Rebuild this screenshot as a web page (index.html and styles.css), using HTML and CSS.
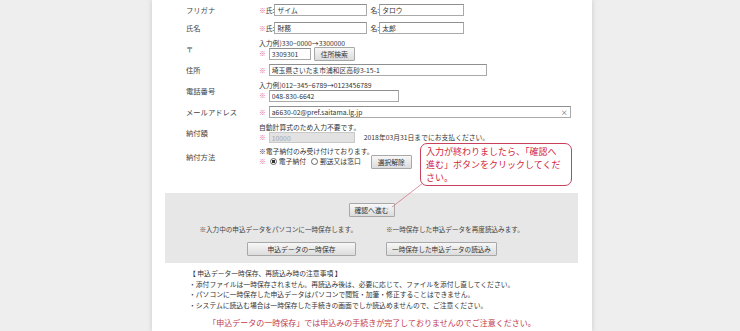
FILE: index.html
```html
<!DOCTYPE html>
<html lang="ja">
<head>
<meta charset="utf-8">
<title>申込フォーム</title>
<link rel="stylesheet" href="styles.css">
</head>
<body>
<div class="page">
  <div class="form">
    <div class="row">
      <div class="label">フリガナ</div>
      <div class="val">
        <div class="line"><span class="req tight">※</span><span class="pre">氏:</span><input class="txt w-sei" value="ザイム"><span class="pre mei">名:</span><input class="txt w-mei" value="タロウ"></div>
      </div>
    </div>
    <div class="row">
      <div class="label">氏名</div>
      <div class="val">
        <div class="line"><span class="req tight">※</span><span class="pre">氏:</span><input class="txt w-sei" value="財務"><span class="pre mei">名:</span><input class="txt w-mei" value="太郎"></div>
      </div>
    </div>
    <div class="row tall">
      <div class="label">〒</div>
      <div class="val">
        <div class="ex">入力例)330−0000→3300000</div>
        <div class="line"><span class="req">※</span><input class="txt w-zip" value="3309301"><button class="btn b-zip">住所検索</button></div>
      </div>
    </div>
    <div class="row">
      <div class="label">住所</div>
      <div class="val">
        <div class="line"><span class="req">※</span><input class="txt w-addr" value="埼玉県さいたま市浦和区高砂3-15-1"></div>
      </div>
    </div>
    <div class="row tall">
      <div class="label">電話番号</div>
      <div class="val">
        <div class="ex">入力例)012−345−6789→0123456789</div>
        <div class="line"><span class="req">※</span><input class="txt w-tel" value="048-830-6642"></div>
      </div>
    </div>
    <div class="row">
      <div class="label">メールアドレス</div>
      <div class="val">
        <div class="line"><span class="req">※</span><span class="clearwrap"><input class="txt w-mail" value="a6630-02@pref.saitama.lg.jp"><span class="clear">×</span></span></div>
      </div>
    </div>
    <div class="row tall">
      <div class="label">納付額</div>
      <div class="val">
        <div class="ex">自動計算式のため入力不要です。</div>
        <div class="line"><span class="req">※</span><input class="txt w-amt" value="10000" disabled><span class="due">2018年03月31日までにお支払ください。</span></div>
      </div>
    </div>
    <div class="row tall">
      <div class="label">納付方法</div>
      <div class="val">
        <div class="ex">※電子納付のみ受け付けております。</div>
        <div class="line"><span class="req">※</span><span class="radio on"></span><span class="opt">電子納付</span><span class="radio"></span><span class="opt">郵送又は窓口</span><button class="btn b-clr">選択解除</button></div>
      </div>
    </div>
  </div>

  <div class="actions">
    <div class="confirm"><button class="btn b-confirm">確認へ進む</button></div>
    <div class="cols">
      <div class="col left">
        <div class="note">※入力中の申込データをパソコンに一時保存します。</div>
        <button class="btn b-save">申込データの一時保存</button>
      </div>
      <div class="col right">
        <div class="note">※一時保存した申込データを再度読込みます。</div>
        <button class="btn b-load">一時保存した申込データの読込み</button>
      </div>
    </div>
  </div>

  <div class="notes">
    <div>【 申込データ一時保存、再読込み時の注意事項 】</div>
    <div>・添付ファイルは一時保存されません。再読込み後は、必要に応じて、ファイルを添付し直してください。</div>
    <div>・パソコンに一時保存した申込データはパソコンで閲覧・加筆・修正することはできません。</div>
    <div>・システムに読込む場合は一時保存した手続きの画面でしか読込めませんので、ご注意ください。</div>
  </div>
  <div class="warn">「申込データの一時保存」では申込みの手続きが完了しておりませんのでご注意ください。</div>

  <svg class="pointer" width="36" height="28" viewBox="0 0 36 28"><line x1="2" y1="26" x2="33" y2="2" stroke="#d4788c" stroke-width="0.8"/></svg>
  <div class="callout"><div class="cl">入力が終わりましたら、「確認へ</div><div class="cl">進む」ボタンをクリックしてくだ</div><div class="cl">さい。</div></div>
</div>
</body>
</html>
```
FILE: styles.css
```css
html, body {
  margin: 0;
  padding: 0;
}
body {
  background: #eeeeee;
  font-family: "Noto Sans CJK JP", "Noto Sans", sans-serif;
  color: #333;
  overflow: hidden;
}
.page {
  position: relative;
  width: 440px;
  min-height: 331px;
  margin-left: 152px;
  background: #fff;
  box-shadow: 0 0 5px rgba(0, 0, 0, 0.16);
}
.form {
  padding-top: 1px;
}
.row {
  display: flex;
  align-items: center;
  height: 18px;
}
.row.tall {
  height: 24px;
}
.label {
  width: 73px;
  padding-left: 34px;
  font-size: 7.3px;
  color: #444;
}
.val {
  font-size: 6.8px;
  line-height: 9px;
}
.ex {
  height: 9px;
  white-space: nowrap;
}
.line {
  display: flex;
  align-items: center;
  height: 12px;
  white-space: nowrap;
}
.req {
  color: #e27089;
  margin-right: 3px;
}
.req.tight {
  margin-right: 0;
}
.pre {
  margin-right: 0;
}
.pre.mei {
  margin-left: 3px;
}
.txt {
  box-sizing: border-box;
  height: 12px;
  margin: 0;
  padding: 0 2px;
  border: 1px solid #a9a9a9;
  border-top-color: #8f8f8f;
  font-family: "Noto Sans CJK JP", sans-serif;
  font-size: 6.8px;
  color: #333;
  background: #fff;
  outline: none;
}
.w-sei { width: 93px; }
.w-mei { width: 85px; }
.w-zip { width: 42px; }
.w-addr { width: 218px; }
.w-tel { width: 130px; }
.w-mail { width: 302px; }
.w-amt {
  width: 86px;
  height: 11px;
  background: #e2e2e2;
  color: #a6a6a6;
  border-color: #c8c8c8;
}
.clearwrap {
  position: relative;
  display: inline-flex;
}
.clear {
  position: absolute;
  right: 3px;
  top: 1px;
  font-size: 7px;
  line-height: 10px;
  color: #555;
}
.due {
  margin-left: 9px;
}
.btn {
  box-sizing: border-box;
  height: 14px;
  margin: 0;
  padding: 0;
  border: 1px solid #a8a8a8;
  border-radius: 1px;
  background: linear-gradient(#f7f7f7, #dcdcdc);
  font-family: "Noto Sans CJK JP", sans-serif;
  font-size: 6.8px;
  line-height: 12px;
  color: #333;
  white-space: nowrap;
}
.b-zip {
  width: 41px;
  margin-left: 3px;
}
.b-clr {
  width: 41px;
  margin-left: 6px;
}
.radio {
  box-sizing: border-box;
  width: 7px;
  height: 7px;
  border: 1px solid #666;
  border-radius: 50%;
  margin: 0 2px 0 1px;
  background: #fff;
}
.radio.on {
  background: radial-gradient(circle, #333 0 1.6px, #fff 2px);
}
.opt {
  margin-right: 4px;
}
.actions {
  margin: 24px 14px 0 13px;
  padding: 10px 0 7px;
  background: #e7e7e7;
}
.confirm {
  display: flex;
  justify-content: center;
}
.b-confirm {
  width: 46px;
}
.cols {
  display: grid;
  grid-template-columns: 1fr 1fr;
  column-gap: 29px;
  margin-top: 8px;
}
.col {
  display: flex;
  flex-direction: column;
}
.col.left {
  align-items: flex-end;
}
.col.right {
  align-items: flex-start;
}
.note {
  font-size: 6.6px;
  line-height: 9px;
  white-space: nowrap;
  color: #444;
}
.b-save {
  margin-top: 8px;
  width: 109px;
  margin-right: 1px;
}
.b-load {
  margin-top: 8px;
  width: 111px;
  font-size: 6.6px;
}
.notes {
  margin: 5px 0 0 37px;
  font-size: 6.8px;
  line-height: 10.7px;
  color: #333;
  white-space: nowrap;
}
.warn {
  margin-top: 6px;
  text-align: center;
  font-size: 8px;
  line-height: 12px;
  color: #c23a4e;
  white-space: nowrap;
}
.callout {
  position: absolute;
  left: 268px;
  top: 143px;
  box-sizing: border-box;
  width: 152px;
  height: 43px;
  padding: 1px 0 0 5px;
  border: 1.5px solid #c8405c;
  border-radius: 7px;
  background: #fff;
  font-size: 9px;
  color: #d21c3a;
  white-space: nowrap;
}
.cl {
  height: 13px;
  line-height: 13px;
}
.pointer {
  position: absolute;
  left: 238px;
  top: 181px;
}
```
